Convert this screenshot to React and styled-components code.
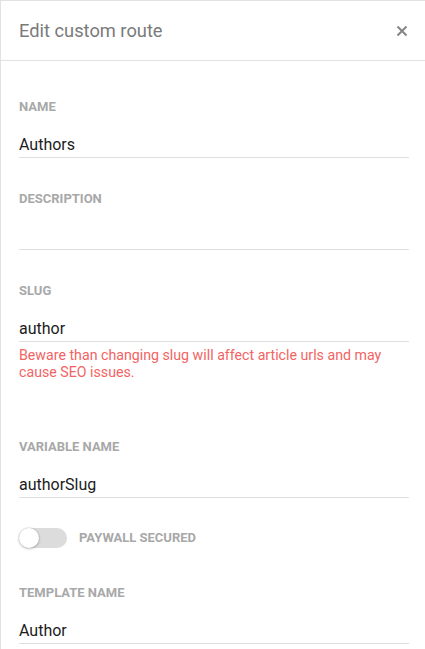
import React from "react";
import styled, { createGlobalStyle } from "styled-components";

const Global = createGlobalStyle`
  html, body { margin: 0; padding: 0; background: #fff; }
  body { font-family: Roboto, "Noto Sans", Arial, sans-serif; -webkit-font-smoothing: antialiased; }
  * { box-sizing: border-box; }
`;

const Panel = styled.div`
  width: 425px;
  height: 649px;
  overflow: hidden;
  border-top: 1px solid #e2e2e2;
  border-left: 1px solid #e2e2e2;
  background: #fff;
`;

const Header = styled.div`
  height: 60px;
  border-bottom: 1px solid #e2e2e2;
  display: flex;
  align-items: center;
  justify-content: space-between;
  padding: 0 16px 0 18px;
`;

const Title = styled.h2`
  margin: 0;
  font-size: 18.3px;
  font-weight: 400;
  color: #7a7a7a;
  line-height: 24px;
`;

const CloseButton = styled.button`
  border: 0;
  background: none;
  padding: 0;
  width: 14px;
  height: 14px;
  display: flex;
  align-items: center;
  justify-content: center;
  cursor: pointer;
`;

const Form = styled.div`
  padding: 39px 16px 0 18px;
  display: flex;
  flex-direction: column;
`;

const Field = styled.div`
  display: flex;
  flex-direction: column;
  margin-bottom: ${(p) => p.$gap}px;
`;

const Label = styled.label`
  display: block;
  font-size: 13px;
  font-weight: 700;
  line-height: 14px;
  color: #a8a8a8;
  text-transform: uppercase;
`;

const Input = styled.input`
  margin-top: 15px;
  height: 29px;
  border: 0;
  border-bottom: 1px solid #dedede;
  padding: 3px 0 0 0;
  font-family: Roboto, "Noto Sans", Arial, sans-serif;
  font-size: 16px;
  line-height: 25px;
  color: #1c1c1c;
  outline: none;
  background: transparent;
`;

const ErrorText = styled.div`
  margin-top: 5px;
  font-size: 14.2px;
  line-height: 17px;
  color: #f26464;
`;

const ToggleRow = styled.div`
  display: flex;
  align-items: center;
  gap: 12px;
  height: 20px;
  margin-bottom: ${(p) => p.$gap}px;
`;

const Track = styled.div`
  position: relative;
  width: 48px;
  height: 20px;
  border-radius: 10px;
  background: #dcdcdc;
  flex: none;
`;

const Thumb = styled.div`
  position: absolute;
  left: 0;
  top: 0;
  width: 20px;
  height: 20px;
  border-radius: 50%;
  background: #fff;
  box-shadow: 0 0 0 1px rgba(0,0,0,0.06), 0 1px 3px rgba(0,0,0,0.22);
`;

const ToggleLabel = styled.span`
  font-size: 13px;
  font-weight: 700;
  line-height: 14px;
  color: #a8a8a8;
  text-transform: uppercase;
`;

function TextField({ label, value, gap, children }) {
  return (
    <Field $gap={gap}>
      <Label>{label}</Label>
      <Input defaultValue={value} readOnly />
      {children}
    </Field>
  );
}

export default function App() {
  return (
    <>
      <Global />
      <Panel>
        <Header>
          <Title>Edit custom route</Title>
          <CloseButton aria-label="Close">
            <svg width="12" height="12" viewBox="0 0 12 12">
              <path d="M1.5 1.5L10.5 10.5M10.5 1.5L1.5 10.5" stroke="#858585" strokeWidth="2" />
            </svg>
          </CloseButton>
        </Header>
        <Form>
          <TextField label="Name" value="Authors" gap={34} />
          <TextField label="Description" value="" gap={34} />
          <TextField label="Slug" value="author" gap={59}>
            <ErrorText>
              Beware than changing slug will affect article urls and may cause SEO issues.
            </ErrorText>
          </TextField>
          <TextField label="Variable name" value="authorSlug" gap={30} />
          <ToggleRow $gap={38}>
            <Track>
              <Thumb />
            </Track>
            <ToggleLabel>Paywall secured</ToggleLabel>
          </ToggleRow>
          <TextField label="Template name" value="Author" gap={0} />
        </Form>
      </Panel>
    </>
  );
}
